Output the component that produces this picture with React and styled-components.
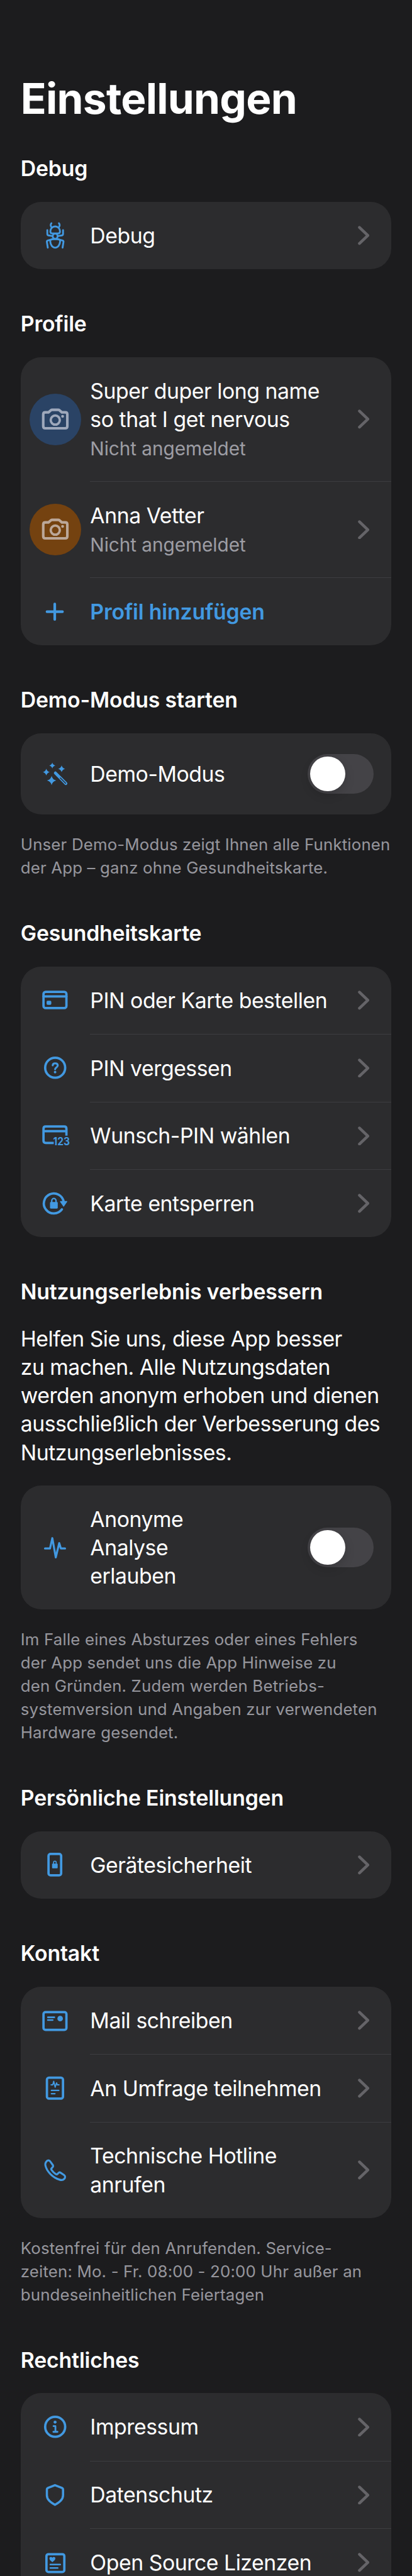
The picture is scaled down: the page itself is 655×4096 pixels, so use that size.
import React from "react";
import styled, { createGlobalStyle } from "styled-components";

// Design units (points) to screen pixels.
const pt = (n) => `${(n * 2.048).toFixed(3)}px`;

const color = {
  page: "#1c1c1e",
  card: "#2c2c2e",
  divider: "#3d3d40",
  text: "#ffffff",
  secondary: "rgba(235, 235, 245, 0.6)",
  accent: "#4299e1",
  chevron: "#656468",
  track: "#444347",
};

const GlobalStyle = createGlobalStyle`
  html, body { margin: 0; padding: 0; background: ${color.page}; }
  body { font-family: Inter, "Liberation Sans", sans-serif; }
`;

const Page = styled.main`
  box-sizing: border-box;
  height: 100vh;
  overflow: hidden;
  padding: ${pt(55.92)} ${pt(16)} 0;
  background: ${color.page};
  color: ${color.text};
`;

const Title = styled.h1`
  margin: 0 0 ${pt(22.8)};
  font-size: ${pt(32.98)};
  line-height: ${pt(41)};
  font-weight: 700;
  letter-spacing: -0.0113em;
`;

const Section = styled.section`
  margin-bottom: ${(p) => pt(p.$note ? 30.4 : 31.33)};
`;

const Heading = styled.h2`
  margin: 0 0 ${pt(15)};
  font-size: ${pt(16.49)};
  line-height: ${pt(22)};
  font-weight: 600;
  letter-spacing: -0.0045em;
`;

const Intro = styled.p`
  margin: ${pt(-0.6)} 0 ${pt(14.7)};
  font-size: ${pt(16.49)};
  line-height: ${pt(22.04)};
  letter-spacing: -0.0154em;
  white-space: pre-line;
`;

const Note = styled.p`
  margin: ${pt(14.75)} 0 0;
  color: ${color.secondary};
  font-size: ${pt(12.61)};
  line-height: ${pt(18)};
  letter-spacing: 0.0065em;
  white-space: pre;
`;

const Card = styled.div`
  background: ${color.card};
  border-radius: ${pt(16)};
  overflow: hidden;
`;

const Divider = styled.div`
  height: 1px;
  margin-left: ${pt(54)};
  margin-bottom: -0.318px;
  background: ${color.divider};
`;

const Row = styled.div`
  box-sizing: border-box;
  display: flex;
  align-items: center;
  padding: ${pt(15.165)} ${pt(17)} ${pt(15.165)} 0;
`;

const SwitchRow = styled(Row)`
  height: ${(p) => pt(p.$tall ? 96.33 : 62.83)};
  padding: 0 ${pt(14)} 0 0;
`;

const IconSlot = styled.div`
  flex: 0 0 ${pt(54)};
  display: flex;
  justify-content: center;
  margin: ${pt(-10)} 0;
`;

const Icon = styled.svg`
  display: block;
  width: ${pt(30)};
  height: ${pt(30)};
  fill: none;
  stroke: currentColor;
  stroke-width: 5.5;
  stroke-linecap: round;
  stroke-linejoin: round;
  color: ${(p) => p.$color || color.accent};
`;

const CameraIcon = styled(Icon)`
  color: rgb(235, 235, 245);
  opacity: 0.6;
`;

const Avatar = styled.div`
  display: flex;
  align-items: center;
  justify-content: center;
  width: ${pt(40)};
  height: ${pt(40)};
  border-radius: 50%;
  background: ${(p) => p.$bg};
`;

const Texts = styled.div`
  display: flex;
  flex-direction: column;
  gap: ${pt(2)};
  width: ${(p) => pt(p.$narrow ? 113 : 190)};
  margin-right: auto;
`;

const Label = styled.span`
  font-size: ${pt(16.49)};
  line-height: ${pt(22)};
  font-weight: ${(p) => (p.$action ? 600 : 400)};
  letter-spacing: ${(p) => (p.$action ? "-0.0043em" : "-0.0135em")};
  color: ${(p) => (p.$action ? color.accent : color.text)};
`;

const Detail = styled.span`
  font-size: ${pt(14.55)};
  line-height: ${pt(20)};
  letter-spacing: -0.0022em;
  color: ${color.secondary};
`;

const ChevronSvg = styled.svg`
  flex: none;
  display: block;
  width: ${pt(9)};
  height: ${pt(15)};
  fill: none;
  stroke: ${color.chevron};
  stroke-width: 6.6;
  stroke-linecap: round;
  stroke-linejoin: round;
`;

const Track = styled.div`
  box-sizing: border-box;
  flex: none;
  width: ${pt(51)};
  height: ${pt(31)};
  padding: ${pt(2)};
  border-radius: ${pt(15.5)};
  background: ${color.track};
`;

const Knob = styled.div`
  width: ${pt(27)};
  height: ${pt(27)};
  border-radius: 50%;
  background: #fff;
  box-shadow: 0 ${pt(3)} ${pt(8)} rgba(0, 0, 0, 0.15);
`;

const IconDigits = styled.text`
  font-family: Inter, sans-serif;
  font-size: 25.5px;
  font-weight: 700;
  fill: currentColor;
  stroke: none;
`;

const solid = { fill: "currentColor", stroke: "none" };

const spark = (x, y, r) => {
  const k = r * 0.2;
  return `M${x} ${y - r}Q${x + k} ${y - k} ${x + r} ${y}Q${x + k} ${y + k} ${x} ${y + r}Q${x - k} ${y + k} ${x - r} ${y}Q${x - k} ${y - k} ${x} ${y - r}Z`;
};

const glyphs = {
  ant: (
    <g strokeWidth="4.2">
      <path d="M36.3 16C33.6 19.5 33.8 22.5 36.8 26M53.7 16C56.4 19.5 56.2 22.5 53.2 26" />
      <path d="M38 39.8H52Q56.2 39.8 56.2 34.7A11.2 11.2 0 0 0 33.8 34.7Q33.8 39.8 38 39.8Z" />
      <ellipse cx="45" cy="46.3" rx="5.8" ry="6.2" />
      <path d="M26.7 32V41Q26.7 43.7 29.3 44.3L39 46M63.3 32V41Q63.3 43.7 60.7 44.3L51 46" />
      <path d="M39 53.2H51Q56.8 53.2 56.5 58.5C56 66.5 51.5 73 45 73C38.5 73 34 66.5 33.5 58.5Q33.2 53.2 39 53.2Z" />
      <path d="M27.8 73L25.7 59.8Q25.2 57 28 56.2L40 53M62.2 73L64.3 59.8Q64.8 57 62 56.2L50 53" />
    </g>
  ),
  camera: (
    <>
      <path d="M22 28.8H29.5L35 24Q36.3 22.9 38 22.9H52Q53.7 22.9 55 24L60.5 28.8H68.5Q73.3 28.8 73.3 33.6V61.2Q73.3 66 68.5 66H22Q17.2 66 17.2 61.2V33.6Q17.2 28.8 22 28.8Z" strokeWidth="6" />
      <circle cx="45.2" cy="46.8" r="10.6" />
      <circle cx="62.3" cy="38" r="3.3" {...solid} />
    </>
  ),
  plus: <path d="M26 45H62M44 27V63" strokeWidth="6.2" />,
  wand: (
    <>
      <path d={spark(38.3, 25.2, 7) + spark(24.3, 40.5, 8) + spark(60, 32.8, 8) + spark(36.7, 60.2, 10.8)} {...solid} />
      <path d="M45.5 42.7L69.8 67" strokeWidth="7" />
      <path d="M57 54.2L69.4 66.6" stroke={color.card} strokeWidth="2.1" />
    </>
  ),
  card: (
    <>
      <rect x="17.8" y="26.4" width="53.4" height="38" rx="5" />
      <path d="M18 37H71" />
      <rect x="25" y="47.3" width="11" height="9.6" rx="2.6" {...solid} />
    </>
  ),
  question: (
    <>
      <circle cx="45" cy="45" r="23.3" />
      <path d="M39.3 39.6C39.3 36.6 41.6 34.8 45 34.8C48.6 34.8 51 36.9 51 39.9C51 44.2 44.8 44.2 44.8 48.8" strokeWidth="4.5" />
      <circle cx="44.8" cy="55.2" r="3" {...solid} />
    </>
  ),
  cardPin: (
    <>
      <path d="M71.2 45V29Q71.2 23.8 66 23.8H23Q17.8 23.8 17.8 29V56.7Q17.8 61.9 23 61.9H41.7M18 34.7H71" strokeLinecap="butt" />
      <IconDigits x="40.2" y="66.8" textLength="38.8" lengthAdjust="spacingAndGlyphs">123</IconDigits>
    </>
  ),
  unlock: (
    <>
      <path d="M60.7 58.5A23.3 23.3 0 1 1 64.9 41" />
      <path d="M57.3 40.3H72L64.7 51.2Z" fill="currentColor" strokeWidth="2" />
      <rect x="33" y="41.5" width="18" height="15.2" rx="2" {...solid} />
      <path d="M37 42V38.3A5 5 0 0 1 47 38.3V42" strokeWidth="3.3" />
    </>
  ),
  pulse: <path d="M21.3 47.2H33L38.4 23L46.4 68L54.4 34.5L58.3 47.2H68" strokeWidth="4.7" />,
  phoneLock: (
    <>
      <rect x="29.5" y="20.2" width="29.4" height="49.8" rx="4.6" />
      <rect x="37.8" y="43" width="13" height="11" rx="1.6" {...solid} />
      <path d="M41.2 43.5V40.2A3.1 3.1 0 0 1 47.4 40.2V43.5" strokeWidth="2.4" />
    </>
  ),
  mail: (
    <>
      <rect x="17.8" y="25.5" width="53.4" height="41.4" rx="4.6" />
      <path d="M28 37.6H43M28 43.9H39.2" strokeWidth="3.8" />
      <circle cx="56.6" cy="40.5" r="6.4" {...solid} />
    </>
  ),
  survey: (
    <>
      <rect x="25.8" y="21.3" width="37.4" height="49" rx="4.8" />
      <path d="M35.4 38H39.4L41.6 30L45 43.6L48.2 33.6L49.8 38H54" strokeWidth="2.8" />
      <path d="M36.2 51.2H53.4M36.2 58.7H44.4" strokeWidth="3.3" />
    </>
  ),
  phone: (
    <path
      d="M24.2 25.2C27.2 21.2 31.4 21.4 33.8 25L39.2 32.6C40.8 34.9 40.6 36.6 38.8 38.4L36.8 40.4C35.6 41.6 35.6 43 36.6 44.5C39.5 48.8 42.6 51.6 46.4 54.2C48 55.2 49.4 55 50.6 53.7L52.5 51.6C54 49.9 55.8 49.7 57.8 51L65.8 56.4C69 58.8 68.7 62.4 66 65.3C63.4 68 59.6 68.4 55.5 67.2C40 62.8 25.2 48 22.4 34.5C21.6 30.8 22 28 24.2 25.2Z"
      strokeWidth="4.6"
    />
  ),
  info: (
    <>
      <circle cx="45" cy="45" r="23.3" />
      <circle cx="44.8" cy="34.1" r="3.5" {...solid} />
      <path d="M41.2 43.4H45.6V56.8M40.8 56.8H50.4" strokeWidth="4.1" />
    </>
  ),
  shield: <path d="M44.5 22.8L60.6 29Q63.3 30.1 63.3 33V46.5C63.3 56.5 55 62.5 44.5 68.6C34 62.5 25.7 56.5 25.7 46.5V33Q25.7 30.1 28.4 29Z" strokeWidth="5.2" />,
  license: (
    <>
      <rect x="24.7" y="25.3" width="41.6" height="41.6" rx="4.6" />
      <path d="M38.5 43.8C34 40.5 31.6 38.3 31.6 35.2C31.6 31.2 36.6 30.6 38.5 33.8C40.4 30.6 45.4 31.2 45.4 35.2C45.4 38.3 43 40.5 38.5 43.8Z" {...solid} />
      <path d="M33.6 49.4H57M33.6 57.4H51" strokeWidth="3.5" />
    </>
  ),
};

const Glyph = ({ name }) => (
  <Icon viewBox="0 0 90 90" aria-hidden="true">
    {glyphs[name]}
  </Icon>
);

const Chevron = () => (
  <ChevronSvg viewBox="0 0 27 45" aria-hidden="true">
    <path d="M3.6 3.8L23.2 22.5L3.6 41.2" />
  </ChevronSvg>
);

const LinkRow = ({ icon, children }) => (
  <Row>
    <IconSlot>
      <Glyph name={icon} />
    </IconSlot>
    <Texts>
      <Label>{children}</Label>
    </Texts>
    <Chevron />
  </Row>
);

const ProfileRow = ({ name, status, bg }) => (
  <Row>
    <IconSlot>
      <Avatar $bg={bg}>
        <CameraIcon viewBox="0 0 90 90" aria-hidden="true">
          {glyphs.camera}
        </CameraIcon>
      </Avatar>
    </IconSlot>
    <Texts>
      <Label>{name}</Label>
      <Detail>{status}</Detail>
    </Texts>
    <Chevron />
  </Row>
);

const ToggleRow = ({ icon, tall, children }) => (
  <SwitchRow $tall={tall}>
    <IconSlot>
      <Glyph name={icon} />
    </IconSlot>
    <Texts $narrow>
      <Label>{children}</Label>
    </Texts>
    <Track role="switch" aria-checked="false">
      <Knob />
    </Track>
  </SwitchRow>
);

const LinkCard = ({ items }) => (
  <Card>
    {items.map(([icon, label], i) => (
      <React.Fragment key={label}>
        {i > 0 && <Divider />}
        <LinkRow icon={icon}>{label}</LinkRow>
      </React.Fragment>
    ))}
  </Card>
);

export default function App() {
  return (
    <>
      <GlobalStyle />
      <Page lang="de">
        <Title>Einstellungen</Title>

        <Section>
          <Heading>Debug</Heading>
          <LinkCard items={[["ant", "Debug"]]} />
        </Section>

        <Section>
          <Heading>Profile</Heading>
          <Card>
            <ProfileRow name="Super duper long name so that I get nervous" status="Nicht angemeldet" bg="#2a4365" />
            <Divider />
            <ProfileRow name="Anna Vetter" status="Nicht angemeldet" bg="#744210" />
            <Divider />
            <Row>
              <IconSlot>
                <Glyph name="plus" />
              </IconSlot>
              <Texts>
                <Label $action>Profil hinzufügen</Label>
              </Texts>
            </Row>
          </Card>
        </Section>

        <Section $note>
          <Heading>Demo-Modus starten</Heading>
          <Card>
            <ToggleRow icon="wand">Demo-Modus</ToggleRow>
          </Card>
          <Note>{"Unser Demo-Modus zeigt Ihnen alle Funktionen\nder App – ganz ohne Gesundheitskarte."}</Note>
        </Section>

        <Section>
          <Heading>Gesundheitskarte</Heading>
          <LinkCard
            items={[
              ["card", "PIN oder Karte bestellen"],
              ["question", "PIN vergessen"],
              ["cardPin", "Wunsch-PIN wählen"],
              ["unlock", "Karte entsperren"],
            ]}
          />
        </Section>

        <Section $note>
          <Heading>Nutzungserlebnis verbessern</Heading>
          <Intro>
            {"Helfen Sie uns, diese App besser\nzu machen. Alle Nutzungsdaten\nwerden anonym erhoben und dienen\nausschließlich der Verbesserung des\nNutzungserlebnisses."}
          </Intro>
          <Card>
            <ToggleRow icon="pulse" tall>
              Anonyme Analyse erlauben
            </ToggleRow>
          </Card>
          <Note>
            {"Im Falle eines Absturzes oder eines Fehlers\nder App sendet uns die App Hinweise zu\nden Gründen. Zudem werden Betriebs-\nsystemversion und Angaben zur verwendeten\nHardware gesendet."}
          </Note>
        </Section>

        <Section>
          <Heading>Persönliche Einstellungen</Heading>
          <LinkCard items={[["phoneLock", "Gerätesicherheit"]]} />
        </Section>

        <Section $note>
          <Heading>Kontakt</Heading>
          <LinkCard
            items={[
              ["mail", "Mail schreiben"],
              ["survey", "An Umfrage teilnehmen"],
              ["phone", "Technische Hotline anrufen"],
            ]}
          />
          <Note>
            {"Kostenfrei für den Anrufenden. Service-\nzeiten: Mo. - Fr. 08:00 - 20:00 Uhr außer an\nbundeseinheitlichen Feiertagen"}
          </Note>
        </Section>

        <Section>
          <Heading>Rechtliches</Heading>
          <LinkCard
            items={[
              ["info", "Impressum"],
              ["shield", "Datenschutz"],
              ["license", "Open Source Lizenzen"],
            ]}
          />
        </Section>
      </Page>
    </>
  );
}
